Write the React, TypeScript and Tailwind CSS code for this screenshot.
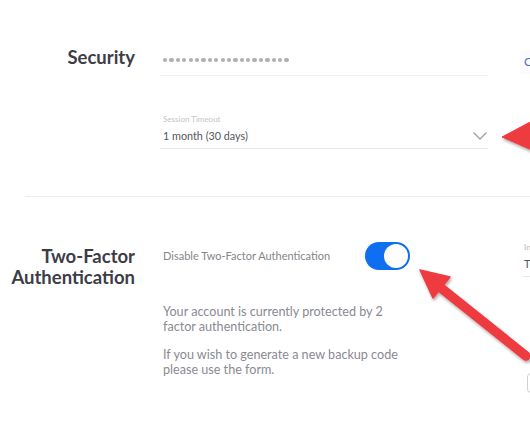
import React from "react";

function Dots() {
  return (
    <div className="flex items-center gap-[2.1px]">
      {Array.from({ length: 20 }).map((_, i) => (
        <span key={i} className="block w-[4.3px] h-[4.3px] rounded-full bg-[#aeaeb4]" />
      ))}
    </div>
  );
}

export default function App() {
  return (
    <div className="relative w-[530px] h-[442px] overflow-hidden bg-white font-['Lato','Noto_Sans',sans-serif] text-[#3c3c46]">
      {/* Security section */}
      <div className="flex pt-[45px]">
        <div className="w-[135px] shrink-0 text-right text-[18.5px] font-bold leading-[22px] text-[#3d3d47] pt-[1px]">
          Security
        </div>
        <div className="ml-[25px] w-[328px] shrink-0">
          <div className="h-[31px] flex items-center pl-[3px] border-b border-[#efeff1]">
            <Dots />
          </div>
          <div className="mt-[38px]">
            <div className="pl-[3px] text-[8px] leading-[10px] text-[#c4c4c8]">Session Timeout</div>
            <div className="h-[25px] flex items-center justify-between pl-[3px] pr-[1px] border-b border-[#e6e6ea]">
              <span className="text-[10.8px] text-[#55555c]">1 month (30 days)</span>
              <svg width="14" height="8" viewBox="0 0 14 8" fill="none">
                <path d="M1 1l6 6 6-6" stroke="#9a9aa0" strokeWidth="1.2" strokeLinecap="round" strokeLinejoin="round" />
              </svg>
            </div>
          </div>
        </div>
        <div className="ml-[32px] shrink-0 pt-[5px]">
          <div className="h-[24px] px-[4px] flex items-center rounded bg-[#fbfbfd] text-[12px] text-[#4a72b8]">
            Change
          </div>
        </div>
      </div>

      {/* divider */}
      <div className="ml-[25px] mt-[47px] h-px bg-[#ebebee]" />

      {/* Two-factor section */}
      <div className="flex mt-[45px]">
        <div className="w-[135px] shrink-0 text-right text-[18.5px] font-bold leading-[21px] text-[#3d3d47] pt-[4px]">
          <div>Two-Factor</div>
          <div>Authentication</div>
        </div>
        <div className="ml-[25px] w-[328px] shrink-0">
          <div className="flex items-center">
            <div className="w-[205px] shrink-0 pl-[3px] text-[11px] text-[#85858c]">
              Disable Two-Factor Authentication
            </div>
            <div className="w-[45px] h-[28px] rounded-full bg-[#0e6ff0] p-[2px] flex justify-end">
              <div className="w-[24px] h-[24px] rounded-full bg-white" />
            </div>
          </div>
          <div className="mt-[34px] pl-[3px] w-[242px] text-[12.6px] leading-[15px] text-[#8a8a92]">
            <p>Your account is currently protected by 2 factor authentication.</p>
            <p className="mt-[13px]">If you wish to generate a new backup code please use the form.</p>
          </div>
        </div>
        <div className="ml-[35px] shrink-0 flex flex-col">
          <div className="w-[120px]">
            <div className="pl-[1px] text-[8px] leading-[10px] text-[#b8b8be]">Interval</div>
            <div className="h-[25px] flex items-center pl-[1px] border-b border-[#e6e6ea] text-[10.8px] text-[#55555c]">
              Time
            </div>
          </div>
          <div className="mt-[96px] ml-[4px] w-[80px] h-[20px] rounded border border-[#d0d0d6] bg-white" />
        </div>
      </div>

      {/* annotation arrows */}
      <svg className="absolute inset-0 pointer-events-none" width="530" height="442" viewBox="0 0 530 442">
        <defs>
          <filter id="sh" x="-20%" y="-20%" width="140%" height="140%">
            <feDropShadow dx="1" dy="2" stdDeviation="1.6" floodColor="#000" floodOpacity="0.35" />
          </filter>
        </defs>
        <g filter="url(#sh)" fill="#ee3b40" stroke="#ee3b40">
          <polygon points="502,137 534,120 534,151" strokeWidth="1" strokeLinejoin="round" />
          <line x1="441" y1="288" x2="526" y2="356" strokeWidth="9.5" strokeLinecap="round" />
          <polygon points="420,270 433,298 450,277" strokeWidth="1.5" strokeLinejoin="round" />
        </g>
      </svg>
    </div>
  );
}
